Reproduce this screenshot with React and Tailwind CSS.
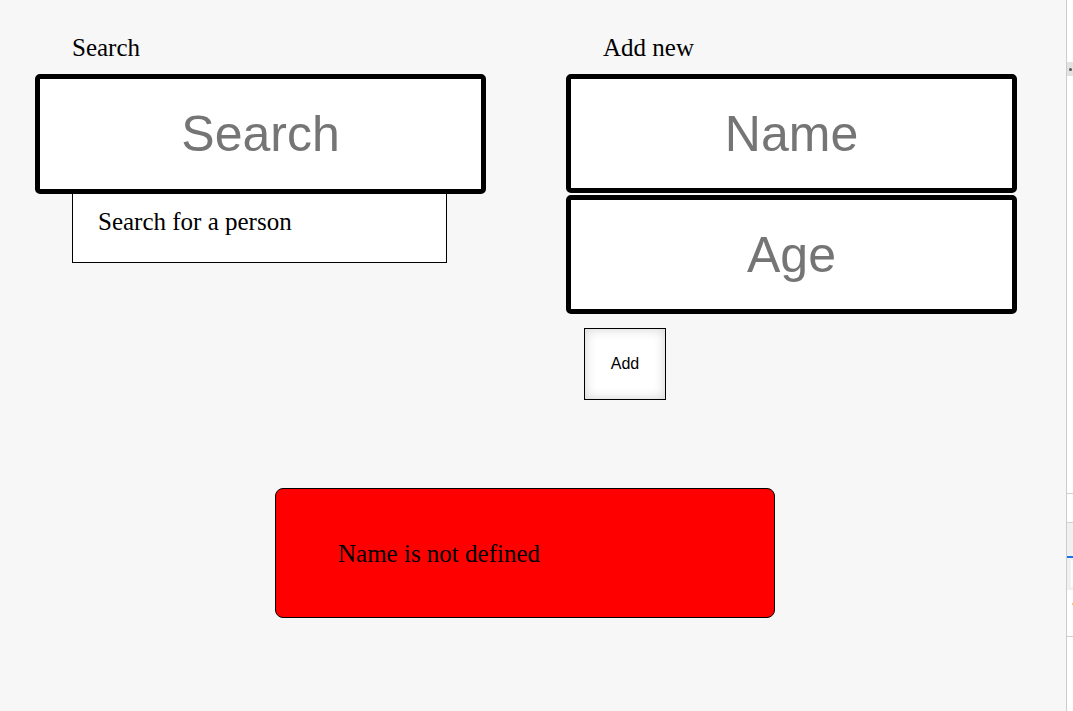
import React from 'react';

const serif = "font-['Liberation_Serif','Times_New_Roman',serif]";
const sans = "font-['Liberation_Sans',Arial,sans-serif]";

const BigInput = ({ placeholder, className = '' }) => (
  <input
    type="text"
    placeholder={placeholder}
    className={`relative z-10 block w-[451px] -ml-[37px] border-[5px] border-black rounded-[5px] bg-white text-center text-[50px] ${sans} text-black placeholder:text-[#757575] outline-none ${className}`}
  />
);

const App = () => {
  return (
    <div className="flex min-h-[711px] bg-[#f7f7f7]">
      <div className="w-[1066px] shrink-0">
        <div className="flex pt-[33px]">
          {/* Search column */}
          <div className="ml-[72px] w-[375px]">
            <div className={`${serif} text-[25px] leading-[29px] text-black`}>Search</div>
            <BigInput placeholder="Search" className="mt-[12px] h-[120px]" />
            <div className="-mt-[4px] h-[73px] border border-black bg-white pl-[25px] pt-[16px]">
              <p className={`${serif} text-[25px] leading-[29px] text-black`}>Search for a person</p>
            </div>
          </div>

          {/* Add new column */}
          <div className="ml-[156px] w-[375px]">
            <div className={`${serif} text-[25px] leading-[29px] text-black`}>Add new</div>
            <BigInput placeholder="Name" className="mt-[12px] h-[119px]" />
            <BigInput placeholder="Age" className="mt-[2px] h-[119px]" />
            <button
              className={`mt-[14px] -ml-[19px] flex h-[72px] w-[82px] items-center justify-center border border-black bg-white shadow-[inset_0_0_12px_rgba(0,0,0,0.18)] ${sans} text-[16px] text-black`}
            >
              Add
            </button>
          </div>
        </div>

        {/* Error message */}
        <div className="mt-[88px] ml-[275px] flex h-[130px] w-[500px] items-center rounded-[8px] border border-black bg-[#ff0000] pl-[62px]">
          <p className={`${serif} text-[25px] leading-[29px] text-black`}>Name is not defined</p>
        </div>
      </div>

      {/* devtools edge */}
      <div className="flex flex-1 flex-col border-l border-[#cccccc] bg-white">
        <div className="mt-[62px] flex h-[14px] items-center bg-[#e2e2e2] pl-[2px]">
          <span className="h-[3px] w-[3px] rounded-full bg-[#555]" />
        </div>
        <div className="mt-[417px] border-t border-[#d0d0d0]" />
        <div className="mt-[28px] flex h-[68px] flex-col border-t border-[#d0d0d0] bg-[#f1f1f1]">
          <div className="mt-[33px] h-[2px] bg-[#1a73e8]" />
          <div className="ml-[4px] mt-[2px] h-[27px] bg-white" />
        </div>
        <div className="ml-[5px] mt-[13px] h-[2px] w-[2px] bg-[#f2c94c]" />
        <div className="mt-[31px] border-t border-[#d0d0d0]" />
      </div>
    </div>
  );
};

export default App;
